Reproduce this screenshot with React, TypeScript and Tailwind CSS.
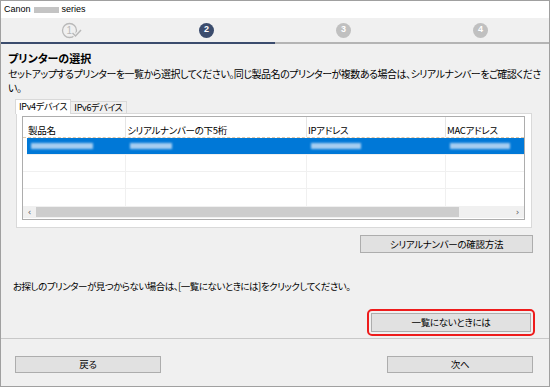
import React from "react";

const jp = "font-['Noto_Sans_CJK_JP','Noto_Sans',sans-serif] [font-feature-settings:'palt']";

function StepDone() {
  return (
    <svg width="22" height="17" viewBox="0 0 22 17">
      <circle cx="8.5" cy="8.5" r="7" fill="none" stroke="#b9b9b9" strokeWidth="1.3" />
      <text x="8.3" y="12" textAnchor="middle" fontSize="10" fill="#b9b9b9" fontFamily="Liberation Sans, sans-serif">
        1
      </text>
      <path d="M11.5 11 L14.5 14 L20 8" fill="none" stroke="#f0f0f0" strokeWidth="3.5" />
      <path d="M11.5 11 L14.5 14 L20 8" fill="none" stroke="#b9b9b9" strokeWidth="1.5" />
    </svg>
  );
}

function StepNum({ n, active }: { n: number; active?: boolean }) {
  return (
    <div
      className={
        "w-[15px] h-[15px] rounded-full flex items-center justify-center text-white text-[9px] font-bold font-['Liberation_Sans',sans-serif] " +
        (active ? "bg-[#3b4c6d]" : "bg-[#c0c0c0]")
      }
    >
      {n}
    </div>
  );
}

function Btn({ children, className = "" }: { children: React.ReactNode; className?: string }) {
  return (
    <div
      className={
        "flex items-center justify-center bg-[#e1e1e1] border border-[#adadad] text-[9.5px] tracking-[-0.3px] text-black " +
        className
      }
    >
      {children}
    </div>
  );
}

function Blur({ w }: { w: number }) {
  return <div className="h-[6px] bg-[#cfe3f7] blur-[1px] opacity-80" style={{ width: w }} />;
}

export default function App() {
  const cols = ["w-[99px]", "w-[181px]", "w-[139px]", "flex-1"];
  return (
    <div className={"w-[550px] h-[387px] border border-[#a0a0a0] bg-[#f0f0f0] flex flex-col text-black " + jp}>
      {/* title bar */}
      <div className="h-[17px] bg-white flex items-center pl-[3px] gap-[3px] text-[9px] font-['Liberation_Sans',sans-serif]">
        <span>Canon</span>
        <span className="w-[25px] h-[6px] bg-[#c4c4c4] blur-[0.6px]" />
        <span>series</span>
      </div>

      {/* steps */}
      <div className="h-[24px] grid grid-cols-4 items-center justify-items-center">
        <div className="pl-[4px]">
          <StepDone />
        </div>
        <StepNum n={2} active />
        <StepNum n={3} />
        <StepNum n={4} />
      </div>
      <div className="h-[2px] flex">
        <div className="w-1/2 bg-[#3b4c6d]" />
        <div className="w-1/2 bg-[#b4b4b4]" />
      </div>

      {/* content */}
      <div className="flex-1 flex flex-col">
        <div className="pl-[7px] pt-[7px] text-[11px] font-bold leading-[14px]">プリンターの選択</div>
        <div className="pl-[7px] pt-[2px] text-[10px] tracking-[-0.5px] leading-[14px] whitespace-nowrap overflow-hidden">
          セットアップするプリンターを一覧から選択してください。同じ製品名のプリンターが複数ある場合は、シリアルナンバーをご確認くださ
          <br />
          い。
        </div>

        {/* tabs */}
        <div className="ml-[14px] mt-[4px] flex items-end h-[15px] text-[9px] tracking-[-0.3px]">
          <div className="h-[15px] px-[3px] bg-white border border-b-0 border-[#d9d9d9] flex items-center relative z-10">
            IPv4デバイス
          </div>
          <div className="h-[13px] px-[3px] bg-[#f0f0f0] border border-l-0 border-b-0 border-[#d9d9d9] flex items-center">
            IPv6デバイス
          </div>
        </div>
        <div className="ml-[15px] w-[516px] h-[115px] -mt-px bg-white border border-[#d9d9d9] pt-[2px] pl-[5px] pr-[6px]">
          <div className="h-[104px] border border-[#adadad] flex flex-col text-[9.5px] tracking-[-0.3px]">
            {/* header */}
            <div className="h-[21px] flex border-b border-dashed border-[#e0c8a8] pl-[4px]">
              {["製品名", "シリアルナンバーの下5桁", "IPアドレス", "MACアドレス"].map((h, i) => (
                <div key={h} className={cols[i] + " pl-[1px] pt-[6px] leading-[14px] " + (i < 3 ? "border-r border-[#e5e5e5]" : "")}>
                  {h}
                </div>
              ))}
            </div>
            {/* selected row */}
            <div className="h-[17px] flex pl-[4px]">
              <div className="flex-1 flex bg-[#0078d7] border-b border-[#f0f0f0]">
                <div className={cols[0] + " flex items-center pl-[4px]"}>
                  <Blur w={62} />
                </div>
                <div className={cols[1] + " flex items-center pl-[4px]"}>
                  <Blur w={42} />
                </div>
                <div className={cols[2] + " flex items-center pl-[4px]"}>
                  <Blur w={50} />
                </div>
                <div className={cols[3] + " flex items-center pl-[4px]"}>
                  <Blur w={60} />
                </div>
              </div>
            </div>
            {[0, 1, 2].map((r) => (
              <div key={r} className={"h-[17px] flex pl-[4px] " + (r < 2 ? "border-b border-[#f0f0f0]" : "")}>
                {cols.map((c, i) => (
                  <div key={i} className={c + " " + (i < 3 ? "border-r border-[#f0f0f0]" : "")} />
                ))}
              </div>
            ))}
            {/* scrollbar */}
            <div className="h-[12px] mt-auto mb-[1px] flex items-center bg-[#f0f0f0]">
              <div className="w-[13px] text-center text-[9px] leading-none text-[#606060] font-['DejaVu_Sans',sans-serif]">‹</div>
              <div className="w-[423px] h-[10px] bg-[#cdcdcd]" />
              <div className="flex-1" />
              <div className="w-[13px] text-center text-[9px] leading-none text-[#606060] font-['DejaVu_Sans',sans-serif]">›</div>
            </div>
          </div>
        </div>

        <div className="flex justify-end pr-[16px] mt-[7px]">
          <Btn className="w-[173px] h-[18px]">シリアルナンバーの確認方法</Btn>
        </div>

        <div className="pl-[12px] mt-[26px] text-[9.5px] tracking-[-0.5px] leading-[14px]">
          お探しのプリンターが見つからない場合は、[一覧にないときには]をクリックしてください。
        </div>

        <div className="flex justify-end pr-[14px] mt-[16px]">
          <div className="w-[168px] h-[27px] rounded-[5px] border-2 border-[#ee1c1c] p-[2px]">
            <Btn className="w-full h-full">一覧にないときには</Btn>
          </div>
        </div>
      </div>

      {/* footer */}
      <div className="h-[48px] border-t border-[#c8c8c8] flex items-start justify-between pl-[14px] pr-[16px] pt-[17px]">
        <Btn className="w-[146px] h-[17px]">戻る</Btn>
        <Btn className="w-[146px] h-[17px]">次へ</Btn>
      </div>
    </div>
  );
}
